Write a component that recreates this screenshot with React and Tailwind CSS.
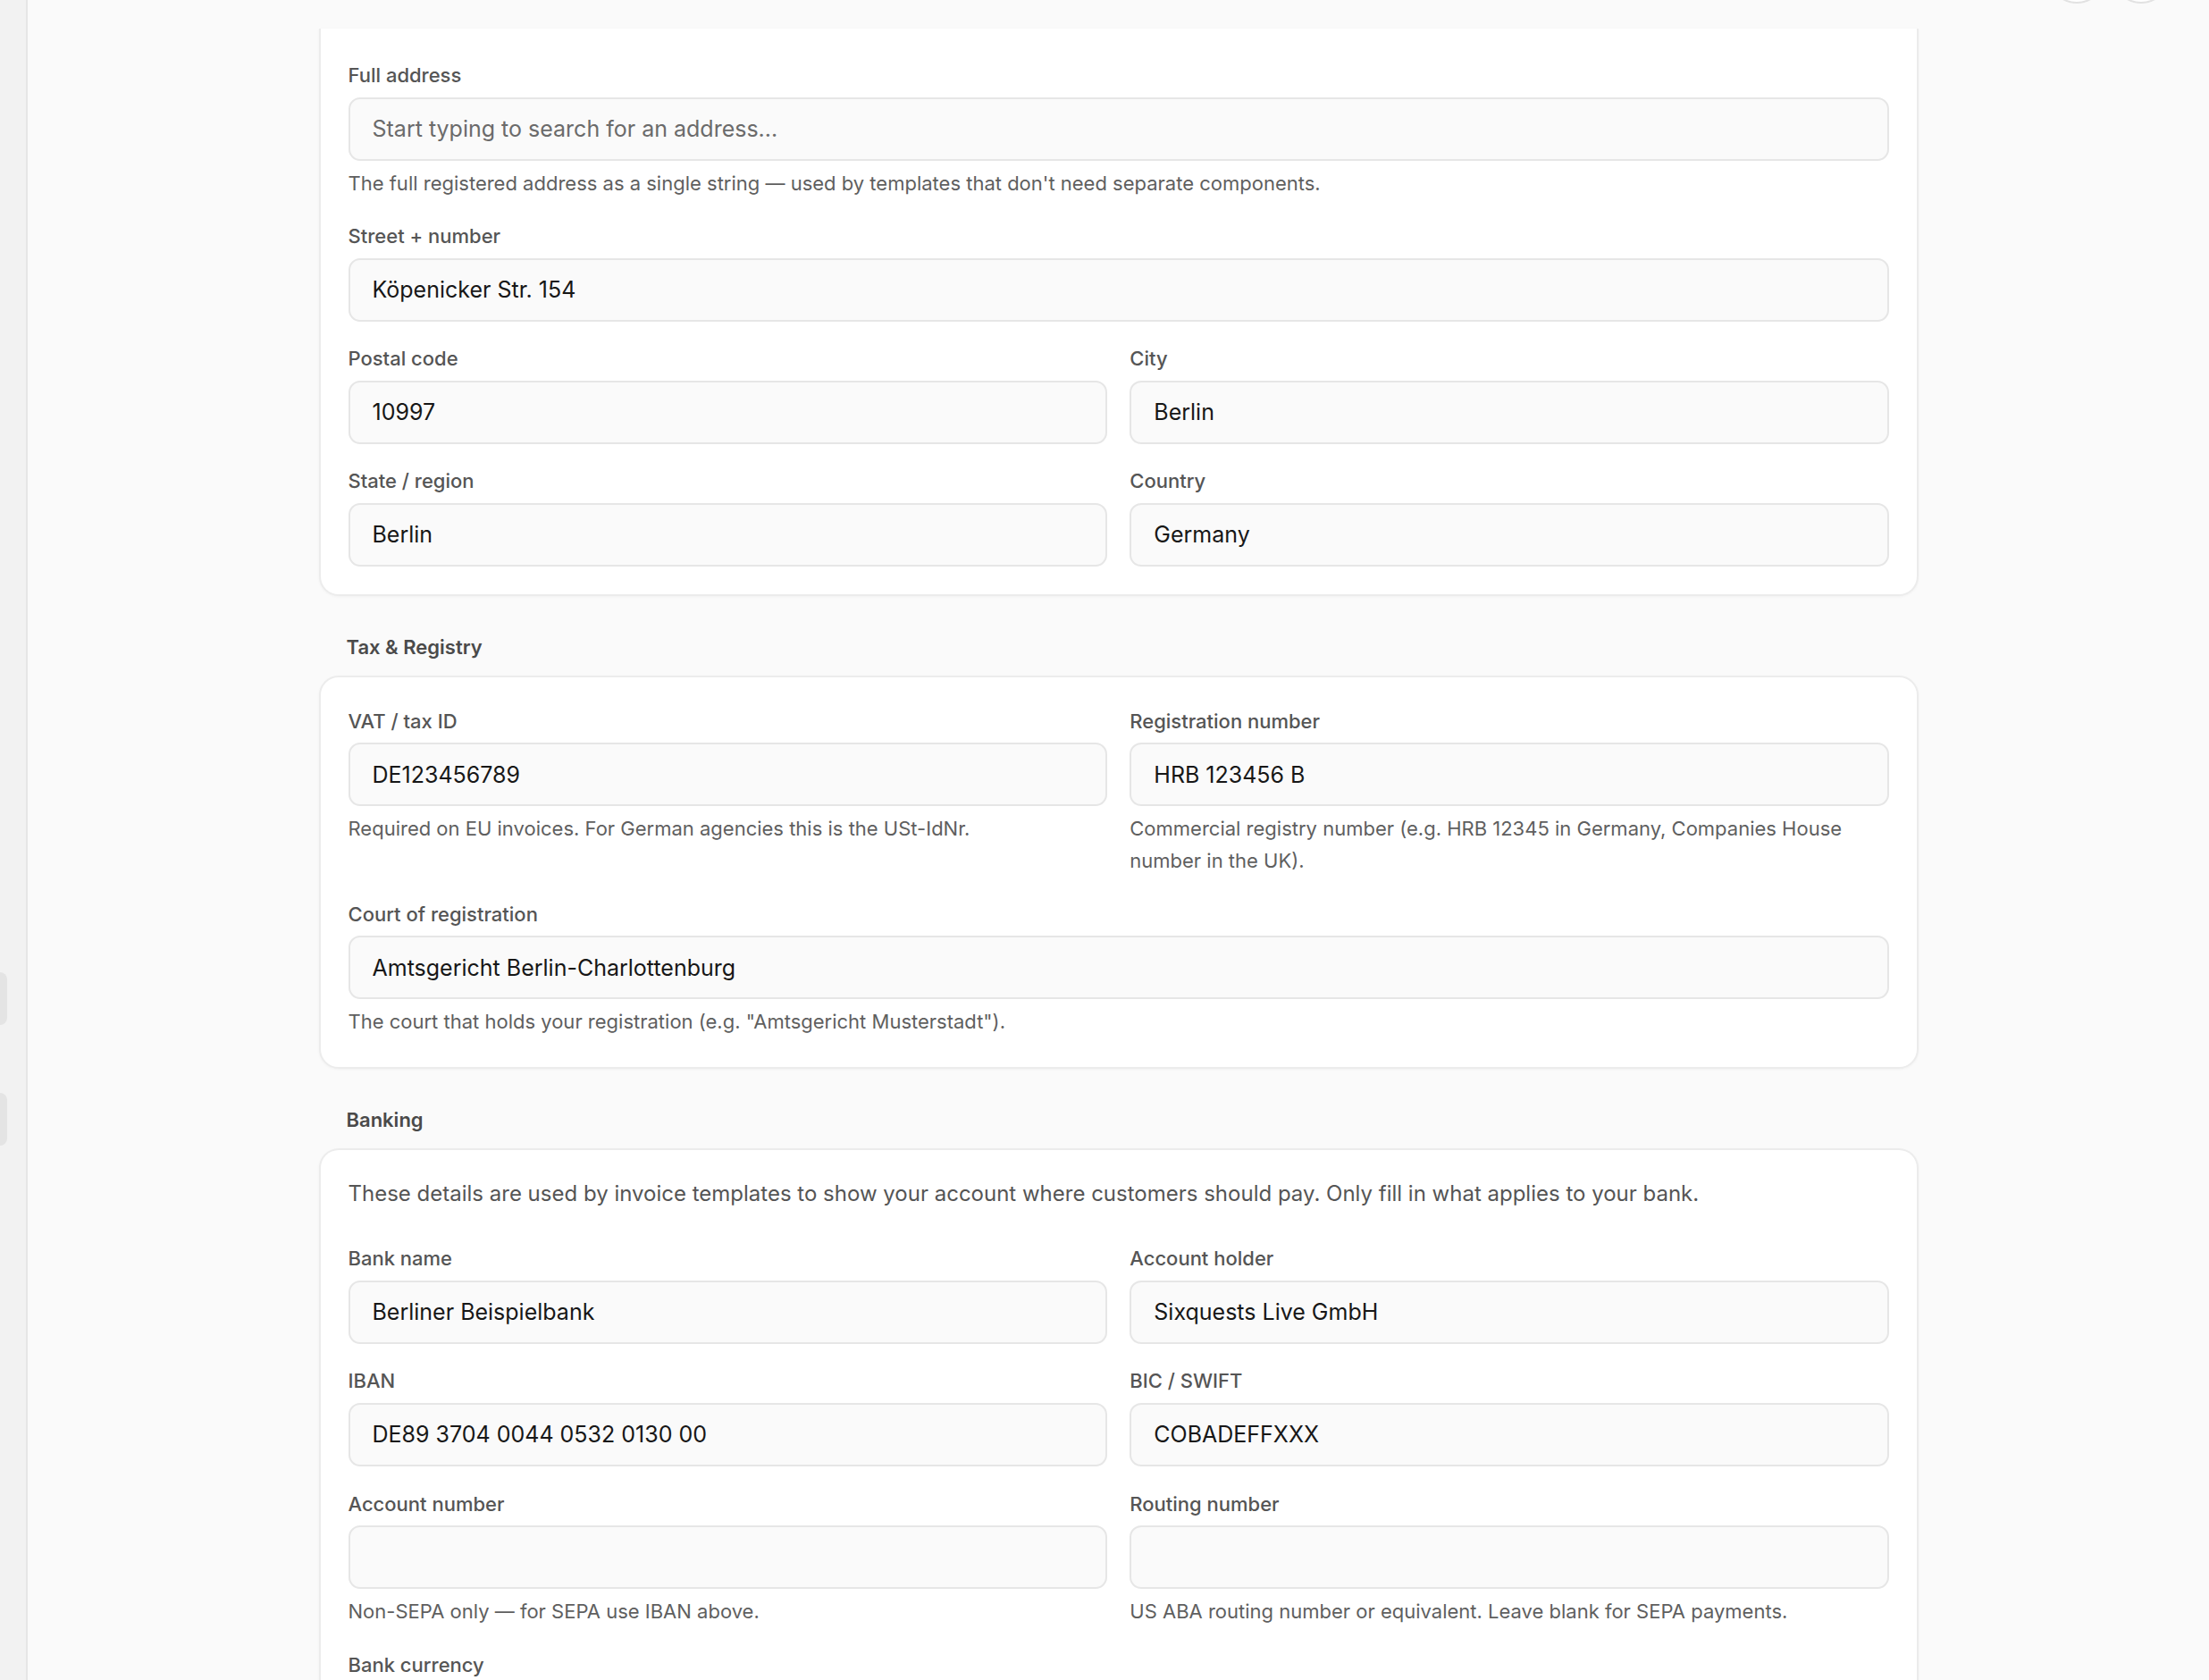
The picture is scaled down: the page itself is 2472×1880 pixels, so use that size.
import React from "react";

const Label = ({ children }) => (
  <div className="mb-[8.5px] text-[22px] font-medium leading-[32px] text-[#555555]">{children}</div>
);

const Input = ({ value, placeholder }) => (
  <input
    readOnly
    value={value || ""}
    placeholder={placeholder}
    className="block h-[71px] w-full rounded-[13px] border-2 border-[#e6e6e6] bg-[#fafafa] px-[25px] text-[25px] text-[#171717] outline-none placeholder:text-[#6b6b6b]"
  />
);

const Help = ({ children }) => (
  <p className="mt-[7px] text-[22px] leading-[36px] text-[#5f5f5f]">{children}</p>
);

const Field = ({ label, value, placeholder, help, className = "" }) => (
  <div className={className}>
    <Label>{label}</Label>
    <Input value={value} placeholder={placeholder} />
    {help ? <Help>{help}</Help> : null}
  </div>
);

const Heading = ({ children }) => (
  <h2 className="mb-[16px] mt-[41px] pl-[31px] text-[22px] font-semibold leading-[32px] text-[#4a4a4a]">{children}</h2>
);

export default function App() {
  return (
    <div
      className="flex h-[1880px] w-[2472px] overflow-hidden bg-[#fafafa]"
      style={{ fontFamily: "Inter, 'Noto Sans', sans-serif" }}
    >
      <aside className="flex w-[31px] shrink-0 flex-col gap-[76px] border-r-2 border-[#e6e6e6] bg-[#f2f2f2] pt-[1088px]">
        <div className="h-[59px] w-[8px] rounded-r-[10px] bg-[#e4e4e4]" />
        <div className="h-[59px] w-[8px] rounded-r-[10px] bg-[#e4e4e4]" />
      </aside>

      <main className="flex min-w-0 flex-1 flex-col">
        <header className="flex h-[32px] shrink-0 justify-end overflow-hidden pr-[44px]">
          <div className="-mt-[60px] flex gap-[8px]">
            <div className="h-[64px] w-[64px] rounded-full border-2 border-[#e2e2e2] bg-white" />
            <div className="h-[64px] w-[64px] rounded-full border-2 border-[#e2e2e2] bg-white" />
          </div>
        </header>

        <div className="mx-auto w-[1790px]">
          {/* Address card (top scrolled under header) */}
          <section className="rounded-b-[22px] border-2 border-t-0 border-[#ececec] bg-white px-[31px] pb-[31px] pt-[36px] shadow-[0_1px_3px_rgba(0,0,0,0.04)]">
            <div className="grid grid-cols-2 gap-x-[25.6px] gap-y-[25.6px]">
              <Field
                className="col-span-2"
                label="Full address"
                placeholder="Start typing to search for an address..."
                help="The full registered address as a single string — used by templates that don't need separate components."
              />
              <Field className="col-span-2" label="Street + number" value="Köpenicker Str. 154" />
              <Field label="Postal code" value="10997" />
              <Field label="City" value="Berlin" />
              <Field label="State / region" value="Berlin" />
              <Field label="Country" value="Germany" />
            </div>
          </section>

          <Heading>Tax &amp; Registry</Heading>
          <section className="rounded-[22px] border-2 border-[#ececec] bg-white px-[31px] pb-[33px] pt-[33px] shadow-[0_1px_3px_rgba(0,0,0,0.04)]">
            <div className="grid grid-cols-2 gap-x-[25.6px] gap-y-[25.6px]">
              <Field
                label="VAT / tax ID"
                value="DE123456789"
                help="Required on EU invoices. For German agencies this is the USt-IdNr."
              />
              <Field
                label="Registration number"
                value="HRB 123456 B"
                help="Commercial registry number (e.g. HRB 12345 in Germany, Companies House number in the UK)."
              />
              <Field
                className="col-span-2"
                label="Court of registration"
                value="Amtsgericht Berlin-Charlottenburg"
                help={'The court that holds your registration (e.g. "Amtsgericht Musterstadt").'}
              />
            </div>
          </section>

          <Heading>Banking</Heading>
          <section className="rounded-t-[22px] border-2 border-b-0 border-[#ececec] bg-white px-[31px] pb-[31px] pt-[31px] shadow-[0_1px_3px_rgba(0,0,0,0.04)]">
            <p className="mb-[38px] text-[24px] leading-[36px] text-[#555555]">
              These details are used by invoice templates to show your account where customers should pay. Only fill in what applies to your bank.
            </p>
            <div className="grid grid-cols-2 gap-x-[25.6px] gap-y-[25.6px]">
              <Field label="Bank name" value="Berliner Beispielbank" />
              <Field label="Account holder" value="Sixquests Live GmbH" />
              <Field label="IBAN" value="DE89 3704 0044 0532 0130 00" />
              <Field label="BIC / SWIFT" value="COBADEFFXXX" />
              <Field label="Account number" help="Non-SEPA only — for SEPA use IBAN above." />
              <Field
                label="Routing number"
                help="US ABA routing number or equivalent. Leave blank for SEPA payments."
              />
              <Field label="Bank currency" value="" />
            </div>
          </section>
        </div>
      </main>
    </div>
  );
}
